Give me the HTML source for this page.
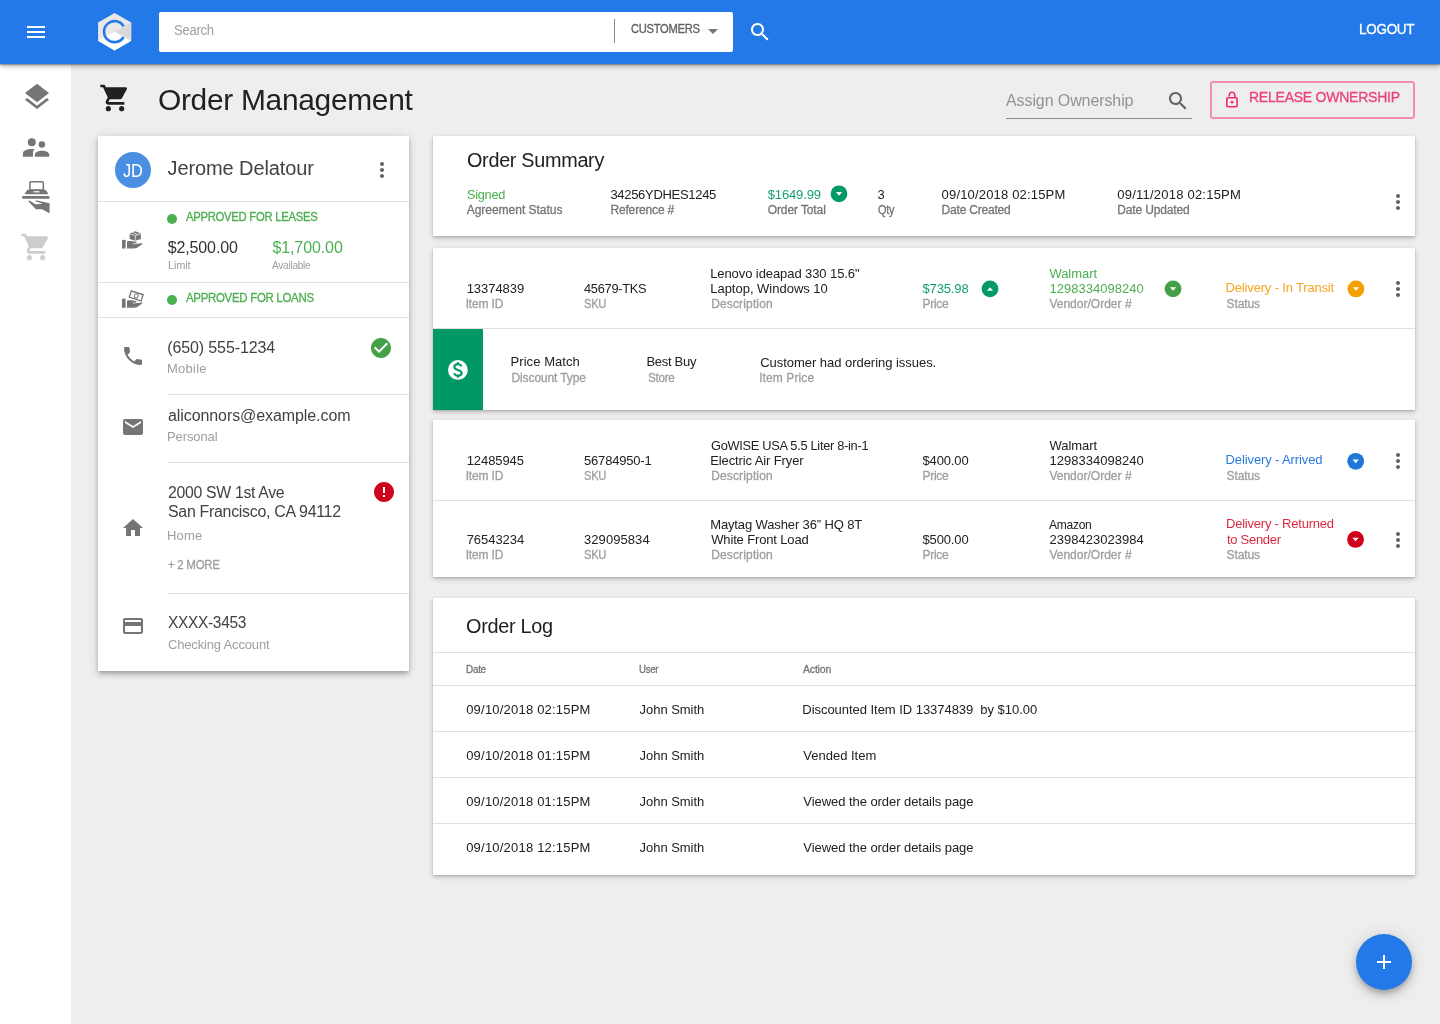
<!DOCTYPE html>
<html><head><meta charset="utf-8"><style>
html,body{margin:0;padding:0}
body{width:1440px;height:1024px;overflow:hidden;background:#eeeeee;position:relative;font-family:"Liberation Sans",sans-serif}
.t{position:absolute;white-space:nowrap;line-height:1;z-index:5;-webkit-font-smoothing:antialiased}
.card{position:absolute;background:#fff;box-shadow:0 2px 5px 0 rgba(0,0,0,.2),0 1px 2px 0 rgba(0,0,0,.14)}
.card4{box-shadow:0 2px 4px -1px rgba(0,0,0,.2),0 4px 5px 0 rgba(0,0,0,.14),0 1px 10px 0 rgba(0,0,0,.12)}
svg{z-index:4}
</style></head><body>
<div style="position:absolute;left:0;top:64px;width:71px;height:960px;background:#fff"></div>
<div style="position:absolute;left:0;top:0;width:1440px;height:64px;background:#2379e8;box-shadow:0 2px 5px rgba(0,0,0,.32),0 1px 1px rgba(0,0,0,.25);z-index:2"></div>
<div style="position:absolute;left:0;top:0;width:1440px;height:64px;z-index:3"><div style="position:absolute;left:27px;top:26px;width:18px;height:2px;background:#fff"></div><div style="position:absolute;left:27px;top:31px;width:18px;height:2px;background:#fff"></div><div style="position:absolute;left:27px;top:36px;width:18px;height:2px;background:#fff"></div><svg style="position:absolute;left:96px;top:11px" width="38" height="42" viewBox="96 11 38 42">
<polygon points="114.6,13 131.2,22.5 131.2,40.7 114.6,50.6 98.1,40.7 98.1,22.5" fill="#e8e8e8"/>
<polygon points="114.6,31.8 131.2,22.5 131.2,40.7" fill="#d9d9d9"/>
<polygon points="114.6,31.8 131.2,40.7 114.6,50.6 98.1,40.7" fill="#ffffff"/>
<path d="M123.6 26.3 A10.5 10.5 0 1 0 123.6 37.0" fill="none" stroke="#2379e8" stroke-width="2.6"/>
</svg><div style="position:absolute;left:159px;top:12px;width:574px;height:40px;background:#fff;border-radius:2px"></div><div style="position:absolute;left:614px;top:19px;width:1px;height:24px;background:#8a8a8a"></div><svg style="position:absolute;left:708px;top:29px" width="10" height="5"><path d="M0 0H10L5 5Z" fill="#757575"/></svg><svg style="position:absolute;left:747.5px;top:20px" width="24" height="24" viewBox="0 0 24 24"><path fill="#fff" d="M15.5 14h-.79l-.28-.27C15.41 12.59 16 11.11 16 9.5 16 5.91 13.09 3 9.5 3S3 5.91 3 9.5 5.91 16 9.5 16c1.61 0 3.09-.59 4.23-1.57l.27.28v.79l5 4.99L20.49 19l-4.99-5zm-6 0C7.01 14 5 11.99 5 9.5S7.01 5 9.5 5 14 7.01 14 9.5 11.99 14 9.5 14z"/></svg></div>
<svg style="position:absolute;left:21px;top:81px" width="32" height="32" viewBox="0 0 24 24"><path fill="#757575" d="M11.99 18.54l-7.37-5.73L3 14.07l9 7 9-7-1.63-1.27-7.38 5.74zM12 16l7.36-5.73L21 9l-9-7-9 7 1.63 1.27L12 16z"/></svg>
<svg style="position:absolute;left:20px;top:136px" width="32" height="24" viewBox="20 136 32 24">
<circle cx="31.8" cy="142.3" r="4" fill="#757575"/><circle cx="41.9" cy="144.5" r="3.2" fill="#757575"/>
<path d="M22.9 156.8 V153.5 C22.9 150.5 27 148.9 32 148.9 H34.6 C33.6 150.2 33 151.5 33 153 V156.8 Z" fill="#757575"/>
<path d="M34.9 156.8 V154.5 C34.9 152 38.5 150.7 42 150.7 C45.5 150.7 49.2 152 49.2 154.5 V156.8 Z" fill="#757575"/>
</svg>
<svg style="position:absolute;left:20px;top:178px" width="32" height="38" viewBox="20 178 32 38">
<rect x="29.9" y="181.7" width="13.4" height="8.2" rx="1" fill="none" stroke="#757575" stroke-width="1.5"/>
<path d="M27.5 189.8 H45.5 L48 193.2 C48 193.8 47.6 194.2 47 194.2 H25.8 C25.2 194.2 24.8 193.8 24.8 193.2 Z" fill="#757575"/>
<rect x="33.5" y="191.2" width="6" height="1.2" fill="#fff"/>
<rect x="22" y="196" width="27.6" height="2.7" rx="1.2" fill="#757575"/>
<path d="M28.3 201.2 L29.5 200.4 L35.3 204.2 L41 204 C41.5 204 41.8 203.6 41.6 203.2 L35.8 201.6 L35.8 200.3 L49.6 203.2 V213.2 L42 209.2 H35.8 Z" fill="#757575"/>
</svg>
<svg style="position:absolute;left:19.6px;top:230.6px" width="32" height="32" viewBox="0 0 24 24"><path fill="#cdcdcd" d="M7 18c-1.1 0-1.99.9-1.99 2S5.9 22 7 22s2-.9 2-2-.9-2-2-2zM1 2v2h2l3.6 7.59-1.35 2.45c-.16.28-.25.61-.25.96 0 1.1.9 2 2 2h12v-2H7.42c-.14 0-.25-.11-.25-.25l.03-.12.9-1.63h7.45c.75 0 1.41-.41 1.75-1.03l3.58-6.49c.08-.14.12-.31.12-.48 0-.55-.45-1-1-1H5.21l-.94-2H1zm16 16c-1.1 0-1.99.9-1.99 2s.89 2 1.99 2 2-.9 2-2-.9-2-2-2z"/></svg>
<svg style="position:absolute;left:98.7px;top:82px" width="32" height="32" viewBox="0 0 24 24"><path fill="#212121" d="M7 18c-1.1 0-1.99.9-1.99 2S5.9 22 7 22s2-.9 2-2-.9-2-2-2zM1 2v2h2l3.6 7.59-1.35 2.45c-.16.28-.25.61-.25.96 0 1.1.9 2 2 2h12v-2H7.42c-.14 0-.25-.11-.25-.25l.03-.12.9-1.63h7.45c.75 0 1.41-.41 1.75-1.03l3.58-6.49c.08-.14.12-.31.12-.48 0-.55-.45-1-1-1H5.21l-.94-2H1zm16 16c-1.1 0-1.99.9-1.99 2s.89 2 1.99 2 2-.9 2-2-.9-2-2-2z"/></svg>
<div style="position:absolute;left:1006px;top:118px;width:186px;height:1px;background:#8a8a8a"></div>
<svg style="position:absolute;left:1165.5px;top:88.6px" width="24" height="24" viewBox="0 0 24 24"><path fill="#616161" d="M15.5 14h-.79l-.28-.27C15.41 12.59 16 11.11 16 9.5 16 5.91 13.09 3 9.5 3S3 5.91 3 9.5 5.91 16 9.5 16c1.61 0 3.09-.59 4.23-1.57l.27.28v.79l5 4.99L20.49 19l-4.99-5zm-6 0C7.01 14 5 11.99 5 9.5S7.01 5 9.5 5 14 7.01 14 9.5 11.99 14 9.5 14z"/></svg>
<div style="position:absolute;left:1210px;top:81px;width:201px;height:34px;border:2px solid #f48db0;border-radius:3px"></div>
<svg style="position:absolute;left:1222px;top:88px" width="20" height="22" viewBox="1222 88 20 22">
<rect x="1226.8" y="97.8" width="10.3" height="8.9" rx="1.2" fill="none" stroke="#ef2a6f" stroke-width="1.6"/>
<path d="M1229.2 96.5 C1229 93.6 1230.4 92.3 1232 92.3 C1233.8 92.3 1235.1 93.8 1235.1 97.5" fill="none" stroke="#ef2a6f" stroke-width="1.6"/>
<circle cx="1232" cy="102.2" r="1.4" fill="#ef2a6f"/>
</svg>
<div class="card card4" style="left:98px;top:136px;width:311px;height:535px"></div>
<div style="position:absolute;left:115px;top:152px;width:36px;height:36px;border-radius:50%;background:#4a8fe2"></div><svg style="position:absolute;left:369.7px;top:158px" width="24" height="24" viewBox="0 0 24 24"><path fill="#616161" d="M12 8c1.1 0 2-.9 2-2s-.9-2-2-2-2 .9-2 2 .9 2 2 2zm0 2c-1.1 0-2 .9-2 2s.9 2 2 2 2-.9 2-2-.9-2-2-2zm0 6c-1.1 0-2 .9-2 2s.9 2 2 2 2-.9 2-2-.9-2-2-2z"/></svg><div style="position:absolute;left:98px;top:201px;width:311px;height:1px;background:#e0e0e0"></div><div style="position:absolute;left:167px;top:214px;width:10px;height:10px;border-radius:50%;background:#4caf50"></div><svg style="position:absolute;left:120px;top:229px" width="26" height="22" viewBox="120 229 26 22">
<rect x="122" y="239.9" width="3.6" height="8.6" fill="#757575"/>
<path d="M127 241.6 C128.5 241 130.5 241 132.6 241.3 L136 241.8 C136.8 242 136.8 243 136 243.2 L132.6 243.6 L133 244.2 L141.6 243.2 C142.4 243.1 142.8 243.8 142.2 244.3 L137.5 247.6 C136.5 248.3 135 248.5 133.5 248.5 H127 Z" fill="#757575"/>
<path d="M135.3 231.3 L140.9 233.6 V239 L135.3 240.7 L129.7 239 V233.6 Z" fill="#757575"/>
<path d="M129.9 233.7 L135.3 235.6 L140.7 233.7 M135.3 235.6 V240.6 M132.3 232.3 L137.8 234.5" fill="none" stroke="#fff" stroke-width="0.7"/>
</svg><div style="position:absolute;left:98px;top:282px;width:311px;height:1px;background:#e0e0e0"></div><svg style="position:absolute;left:120px;top:289px" width="26" height="22" viewBox="120 289 26 22">
<rect x="122" y="298.7" width="3.6" height="9" fill="#757575"/>
<path d="M127 300.8 C128.5 300.2 130.5 300.2 132.6 300.5 L136 301 C136.8 301.2 136.8 302.2 136 302.4 L132.6 302.8 L133 303.4 L141.6 302.4 C142.4 302.3 142.8 303 142.2 303.5 L137.5 306.8 C136.5 307.5 135 307.7 133.5 307.7 H127 Z" fill="#757575"/>
<g transform="rotate(18 136 296)"><rect x="130" y="292.6" width="12.4" height="6.6" fill="none" stroke="#757575" stroke-width="1.3"/><ellipse cx="136.2" cy="295.9" rx="1.8" ry="2.2" fill="none" stroke="#757575" stroke-width="1"/></g>
</svg><div style="position:absolute;left:167px;top:295px;width:10px;height:10px;border-radius:50%;background:#4caf50"></div><div style="position:absolute;left:98px;top:317px;width:311px;height:1px;background:#e0e0e0"></div><svg style="position:absolute;left:120.5px;top:343.8px" width="24" height="24" viewBox="0 0 24 24"><path fill="#757575" d="M6.62 10.79c1.44 2.83 3.76 5.14 6.59 6.59l2.2-2.2c.27-.27.67-.36 1.02-.24 1.12.37 2.33.57 3.57.57.55 0 1 .45 1 1V20c0 .55-.45 1-1 1-9.39 0-17-7.61-17-17 0-.55.45-1 1-1h3.5c.55 0 1 .45 1 1 0 1.25.2 2.45.57 3.57.11.35.03.74-.25 1.02l-2.2 2.2z"/></svg><svg style="position:absolute;left:368.8px;top:336px" width="24" height="24" viewBox="0 0 24 24"><path fill="#43a047" d="M12 2C6.48 2 2 6.48 2 12s4.48 10 10 10 10-4.48 10-10S17.52 2 12 2zm-2 15l-5-5 1.41-1.41L10 14.17l7.59-7.59L19 8l-9 9z"/></svg><div style="position:absolute;left:168px;top:394px;width:241px;height:1px;background:#e0e0e0"></div><svg style="position:absolute;left:120.9px;top:415px" width="24" height="24" viewBox="0 0 24 24"><path fill="#757575" d="M20 4H4c-1.1 0-1.99.9-1.99 2L2 18c0 1.1.9 2 2 2h16c1.1 0 2-.9 2-2V6c0-1.1-.9-2-2-2zm0 4l-8 5-8-5V6l8 5 8-5v2z"/></svg><div style="position:absolute;left:168px;top:462px;width:241px;height:1px;background:#e0e0e0"></div><svg style="position:absolute;left:121.3px;top:516.2px" width="24" height="24" viewBox="0 0 24 24"><path fill="#757575" d="M10 20v-6h4v6h5v-8h3L12 3 2 12h3v8z"/></svg><svg style="position:absolute;left:371.8px;top:480px" width="24" height="24" viewBox="0 0 24 24"><path fill="#d0021b" d="M12 2C6.48 2 2 6.48 2 12s4.48 10 10 10 10-4.48 10-10S17.52 2 12 2zm1 15h-2v-2h2v2zm0-4h-2V7h2v6z"/></svg><div style="position:absolute;left:168px;top:593px;width:241px;height:1px;background:#e0e0e0"></div><svg style="position:absolute;left:121.3px;top:614px" width="24" height="24" viewBox="0 0 24 24"><path fill="#757575" d="M20 4H4c-1.11 0-1.99.89-1.99 2L2 18c0 1.11.89 2 2 2h16c1.11 0 2-.89 2-2V6c0-1.11-.89-2-2-2zm0 14H4v-6h16v6zm0-10H4V6h16v2z"/></svg>
<div class="card" style="left:433px;top:136px;width:982px;height:100px"></div>
<svg style="position:absolute;left:829px;top:183px" width="20" height="20" viewBox="829 183 20 20"><circle cx="839.00" cy="193.80" r="8.4" fill="#049a67"/><path fill="#fff" d="M835.90 192.10 L839.00 195.70 L842.10 192.10Z"/></svg>
<svg style="position:absolute;left:1385.8px;top:189.8px" width="24" height="24" viewBox="0 0 24 24"><path fill="#616161" d="M12 8c1.1 0 2-.9 2-2s-.9-2-2-2-2 .9-2 2 .9 2 2 2zm0 2c-1.1 0-2 .9-2 2s.9 2 2 2 2-.9 2-2-.9-2-2-2zm0 6c-1.1 0-2 .9-2 2s.9 2 2 2 2-.9 2-2-.9-2-2-2z"/></svg>
<div class="card" style="left:433px;top:248px;width:982px;height:162px"></div>
<div style="position:absolute;left:433px;top:328px;width:982px;height:1px;background:#e0e0e0"></div>
<div style="position:absolute;left:433px;top:329px;width:50px;height:81px;background:#029866"></div>
<svg style="position:absolute;left:446px;top:358px" width="24" height="24" viewBox="446 358 24 24">
<circle cx="457.9" cy="369.9" r="9.9" fill="#fff"/>
<path d="M461.4 366.3 C460.9 364.9 459.7 364.2 457.9 364.2 C455.7 364.2 454.3 365.3 454.3 366.9 C454.3 368.6 455.8 369.3 457.9 369.9 C460.3 370.6 461.7 371.4 461.7 373.2 C461.7 374.8 460.2 375.6 457.9 375.6 C455.9 375.6 454.6 374.8 454.1 373.2" fill="none" stroke="#029866" stroke-width="2.1"/>
<rect x="456.9" y="362.1" width="2" height="2.4" fill="#029866"/><rect x="456.9" y="375.3" width="2" height="2.4" fill="#029866"/>
</svg>
<svg style="position:absolute;left:980px;top:278px" width="20" height="20" viewBox="980 278 20 20"><circle cx="990.00" cy="288.90" r="8.4" fill="#049a67"/><path fill="#fff" d="M986.90 290.80 L990.00 287.20 L993.10 290.80Z"/></svg>
<svg style="position:absolute;left:1163px;top:278px" width="20" height="20" viewBox="1163 278 20 20"><circle cx="1173.05" cy="288.85" r="8.4" fill="#43a047"/><path fill="#fff" d="M1169.95 287.15 L1173.05 290.75 L1176.15 287.15Z"/></svg>
<svg style="position:absolute;left:1345px;top:278px" width="20" height="20" viewBox="1345 278 20 20"><circle cx="1355.95" cy="288.95" r="8.4" fill="#f5a000"/><path fill="#fff" d="M1352.85 287.25 L1355.95 290.85 L1359.05 287.25Z"/></svg>
<svg style="position:absolute;left:1386px;top:277px" width="24" height="24" viewBox="0 0 24 24"><path fill="#616161" d="M12 8c1.1 0 2-.9 2-2s-.9-2-2-2-2 .9-2 2 .9 2 2 2zm0 2c-1.1 0-2 .9-2 2s.9 2 2 2 2-.9 2-2-.9-2-2-2zm0 6c-1.1 0-2 .9-2 2s.9 2 2 2 2-.9 2-2-.9-2-2-2z"/></svg>
<div class="card" style="left:433px;top:420px;width:982px;height:157px"></div>
<div style="position:absolute;left:433px;top:500px;width:982px;height:1px;background:#e0e0e0"></div>
<svg style="position:absolute;left:1345px;top:451px" width="20" height="20" viewBox="1345 451 20 20"><circle cx="1355.70" cy="461.30" r="8.4" fill="#1f77d8"/><path fill="#fff" d="M1352.60 459.60 L1355.70 463.20 L1358.80 459.60Z"/></svg>
<svg style="position:absolute;left:1386px;top:449px" width="24" height="24" viewBox="0 0 24 24"><path fill="#616161" d="M12 8c1.1 0 2-.9 2-2s-.9-2-2-2-2 .9-2 2 .9 2 2 2zm0 2c-1.1 0-2 .9-2 2s.9 2 2 2 2-.9 2-2-.9-2-2-2zm0 6c-1.1 0-2 .9-2 2s.9 2 2 2 2-.9 2-2-.9-2-2-2z"/></svg>
<svg style="position:absolute;left:1345px;top:529px" width="20" height="20" viewBox="1345 529 20 20"><circle cx="1355.55" cy="539.45" r="8.4" fill="#d0021b"/><path fill="#fff" d="M1352.45 537.75 L1355.55 541.35 L1358.65 537.75Z"/></svg>
<svg style="position:absolute;left:1386px;top:527.5px" width="24" height="24" viewBox="0 0 24 24"><path fill="#616161" d="M12 8c1.1 0 2-.9 2-2s-.9-2-2-2-2 .9-2 2 .9 2 2 2zm0 2c-1.1 0-2 .9-2 2s.9 2 2 2 2-.9 2-2-.9-2-2-2zm0 6c-1.1 0-2 .9-2 2s.9 2 2 2 2-.9 2-2-.9-2-2-2z"/></svg>
<div class="card" style="left:433px;top:598px;width:982px;height:277px"></div>
<div style="position:absolute;left:433px;top:652px;width:982px;height:1px;background:#e0e0e0"></div>
<div style="position:absolute;left:433px;top:685px;width:982px;height:1px;background:#e0e0e0"></div>
<div style="position:absolute;left:433px;top:731px;width:982px;height:1px;background:#e0e0e0"></div>
<div style="position:absolute;left:433px;top:777px;width:982px;height:1px;background:#e0e0e0"></div>
<div style="position:absolute;left:433px;top:823px;width:982px;height:1px;background:#e0e0e0"></div>
<div style="position:absolute;left:1356px;top:934px;width:56px;height:56px;border-radius:50%;background:#2379e8;box-shadow:0 3px 5px -1px rgba(0,0,0,.2),0 6px 10px 0 rgba(0,0,0,.14),0 1px 18px 0 rgba(0,0,0,.12)"></div>
<div style="position:absolute;left:1377px;top:961px;width:14px;height:2px;background:#fff"></div>
<div style="position:absolute;left:1383px;top:955px;width:2px;height:14px;background:#fff"></div>
<div style="position:absolute;left:0;top:0;width:1440px;height:1024px;will-change:transform;z-index:5">
<div class="t" id="t0" style="left:174.00px;top:23.00px;font-size:14.0px;color:#9e9e9e;letter-spacing:-0.300px;transform:scaleX(0.9341);transform-origin:0 0;">Search</div>
<div class="t" id="t1" style="left:631.00px;top:23.00px;font-size:12.0px;color:#5f5f5f;-webkit-text-stroke:0.3px #5f5f5f;letter-spacing:-0.300px;transform:scaleX(0.9318);transform-origin:0 0;">CUSTOMERS</div>
<div class="t" id="t2" style="left:1359.04px;top:22.00px;font-size:14.0px;color:#ffffff;-webkit-text-stroke:0.3px #ffffff;letter-spacing:-0.300px;transform:scaleX(0.9638);transform-origin:0 0;">LOGOUT</div>
<div class="t" id="t3" style="left:157.50px;top:84.70px;font-size:30.0px;color:#212121;letter-spacing:-0.300px;transform:scaleX(0.9969);transform-origin:0 0;">Order Management</div>
<div class="t" id="t4" style="left:1006.00px;top:92.90px;font-size:16.0px;color:#939393;letter-spacing:-0.096px;">Assign Ownership</div>
<div class="t" id="t5" style="left:1249.00px;top:90.00px;font-size:14.0px;color:#ec407a;-webkit-text-stroke:0.3px #ec407a;letter-spacing:-0.236px;">RELEASE OWNERSHIP</div>
<div class="t" id="t6" style="left:122.50px;top:161.80px;font-size:18.0px;color:#ffffff;letter-spacing:-0.300px;transform:scaleX(0.9078);transform-origin:0 0;">JD</div>
<div class="t" id="t7" style="left:167.50px;top:157.70px;font-size:20.0px;color:#424242;letter-spacing:-0.099px;">Jerome Delatour</div>
<div class="t" id="t8" style="left:186.30px;top:211.10px;font-size:12.0px;color:#4caf50;-webkit-text-stroke:0.3px #4caf50;letter-spacing:-0.300px;transform:scaleX(0.9409);transform-origin:0 0;">APPROVED FOR LEASES</div>
<div class="t" id="t9" style="left:167.70px;top:240.30px;font-size:16.0px;color:#333333;letter-spacing:-0.123px;">$2,500.00</div>
<div class="t" id="t10" style="left:168.00px;top:260.00px;font-size:11.0px;color:#9e9e9e;letter-spacing:-0.142px;">Limit</div>
<div class="t" id="t11" style="left:272.40px;top:240.30px;font-size:16.0px;color:#4caf50;letter-spacing:-0.098px;">$1,700.00</div>
<div class="t" id="t12" style="left:272.40px;top:260.00px;font-size:11.0px;color:#9e9e9e;letter-spacing:-0.300px;transform:scaleX(0.9207);transform-origin:0 0;">Available</div>
<div class="t" id="t13" style="left:186.00px;top:292.00px;font-size:12.0px;color:#4caf50;-webkit-text-stroke:0.3px #4caf50;letter-spacing:-0.300px;transform:scaleX(0.9534);transform-origin:0 0;">APPROVED FOR LOANS</div>
<div class="t" id="t14" style="left:167.30px;top:340.00px;font-size:16.0px;color:#424242;letter-spacing:-0.124px;">(650) 555-1234</div>
<div class="t" id="t15" style="left:167.00px;top:362.00px;font-size:13.0px;color:#9e9e9e;letter-spacing:0.237px;">Mobile</div>
<div class="t" id="t16" style="left:168.00px;top:408.00px;font-size:16.0px;color:#424242;letter-spacing:-0.085px;">aliconnors@example.com</div>
<div class="t" id="t17" style="left:167.00px;top:429.80px;font-size:13.0px;color:#9e9e9e;letter-spacing:-0.103px;">Personal</div>
<div class="t" id="t18" style="left:168.40px;top:485.20px;font-size:16.0px;color:#424242;letter-spacing:-0.300px;transform:scaleX(0.9863);transform-origin:0 0;">2000 SW 1st Ave</div>
<div class="t" id="t19" style="left:168.00px;top:504.00px;font-size:16.0px;color:#424242;letter-spacing:-0.300px;transform:scaleX(0.9964);transform-origin:0 0;">San Francisco, CA 94112</div>
<div class="t" id="t20" style="left:167.00px;top:529.00px;font-size:13.0px;color:#9e9e9e;letter-spacing:0.184px;">Home</div>
<div class="t" id="t21" style="left:168.00px;top:559.00px;font-size:12.0px;color:#9e9e9e;-webkit-text-stroke:0.3px #9e9e9e;letter-spacing:-0.300px;transform:scaleX(0.9586);transform-origin:0 0;">+ 2 MORE</div>
<div class="t" id="t22" style="left:168.00px;top:615.00px;font-size:16.0px;color:#424242;letter-spacing:-0.300px;transform:scaleX(0.9642);transform-origin:0 0;">XXXX-3453</div>
<div class="t" id="t23" style="left:168.00px;top:637.60px;font-size:13.0px;color:#9e9e9e;letter-spacing:-0.165px;">Checking Account</div>
<div class="t" id="t24" style="left:466.70px;top:150.00px;font-size:20.0px;color:#212121;letter-spacing:-0.300px;transform:scaleX(0.9903);transform-origin:0 0;">Order Summary</div>
<div class="t" id="t25" style="left:466.70px;top:188.00px;font-size:13.0px;color:#4caf50;letter-spacing:-0.300px;transform:scaleX(0.9833);transform-origin:0 0;">Signed</div>
<div class="t" id="t26" style="left:466.70px;top:204.00px;font-size:12.0px;color:#757575;-webkit-text-stroke:0.3px #757575;letter-spacing:-0.017px;">Agreement Status</div>
<div class="t" id="t27" style="left:610.40px;top:188.00px;font-size:13.0px;color:#212121;letter-spacing:-0.300px;">34256YDHES1245</div>
<div class="t" id="t28" style="left:610.40px;top:204.00px;font-size:12.0px;color:#757575;-webkit-text-stroke:0.3px #757575;letter-spacing:-0.150px;">Reference #</div>
<div class="t" id="t29" style="left:767.70px;top:187.75px;font-size:13.0px;color:#17a06d;letter-spacing:-0.127px;">$1649.99</div>
<div class="t" id="t30" style="left:767.70px;top:204.00px;font-size:12.0px;color:#757575;-webkit-text-stroke:0.3px #757575;letter-spacing:-0.099px;">Order Total</div>
<div class="t" id="t31" style="left:877.50px;top:188.00px;font-size:13.0px;color:#212121;">3</div>
<div class="t" id="t32" style="left:877.50px;top:204.00px;font-size:12.0px;color:#757575;-webkit-text-stroke:0.3px #757575;letter-spacing:-0.300px;transform:scaleX(0.9132);transform-origin:0 0;">Qty</div>
<div class="t" id="t33" style="left:941.60px;top:187.80px;font-size:13.0px;color:#212121;letter-spacing:0.172px;">09/10/2018 02:15PM</div>
<div class="t" id="t34" style="left:941.60px;top:203.90px;font-size:12.0px;color:#757575;-webkit-text-stroke:0.3px #757575;letter-spacing:-0.209px;">Date Created</div>
<div class="t" id="t35" style="left:1117.30px;top:187.80px;font-size:13.0px;color:#212121;letter-spacing:0.223px;">09/11/2018 02:15PM</div>
<div class="t" id="t36" style="left:1117.30px;top:203.90px;font-size:12.0px;color:#757575;-webkit-text-stroke:0.3px #757575;letter-spacing:-0.162px;">Date Updated</div>
<div class="t" id="t37" style="left:466.70px;top:282.10px;font-size:13.0px;color:#212121;letter-spacing:-0.044px;">13374839</div>
<div class="t" id="t38" style="left:465.70px;top:298.10px;font-size:12.0px;color:#9e9e9e;-webkit-text-stroke:0.3px #9e9e9e;letter-spacing:-0.159px;">Item ID</div>
<div class="t" id="t39" style="left:584.00px;top:282.10px;font-size:13.0px;color:#212121;letter-spacing:-0.300px;transform:scaleX(0.9876);transform-origin:0 0;">45679-TKS</div>
<div class="t" id="t40" style="left:584.00px;top:298.10px;font-size:12.0px;color:#9e9e9e;-webkit-text-stroke:0.3px #9e9e9e;letter-spacing:-0.300px;transform:scaleX(0.9313);transform-origin:0 0;">SKU</div>
<div class="t" id="t41" style="left:710.20px;top:266.80px;font-size:13.0px;color:#212121;letter-spacing:-0.085px;">Lenovo ideapad 330 15.6&quot;</div>
<div class="t" id="t42" style="left:710.20px;top:282.10px;font-size:13.0px;color:#212121;letter-spacing:-0.010px;">Laptop, Windows 10</div>
<div class="t" id="t43" style="left:711.20px;top:298.10px;font-size:12.0px;color:#9e9e9e;-webkit-text-stroke:0.3px #9e9e9e;letter-spacing:0.145px;">Description</div>
<div class="t" id="t44" style="left:922.50px;top:282.10px;font-size:13.0px;color:#17a06d;letter-spacing:-0.144px;">$735.98</div>
<div class="t" id="t45" style="left:922.50px;top:298.10px;font-size:12.0px;color:#9e9e9e;-webkit-text-stroke:0.3px #9e9e9e;letter-spacing:-0.292px;">Price</div>
<div class="t" id="t46" style="left:1049.40px;top:266.80px;font-size:13.0px;color:#4caf50;letter-spacing:-0.032px;">Walmart</div>
<div class="t" id="t47" style="left:1049.40px;top:282.10px;font-size:13.0px;color:#4caf50;letter-spacing:0.028px;">1298334098240</div>
<div class="t" id="t48" style="left:1049.40px;top:298.10px;font-size:12.0px;color:#9e9e9e;-webkit-text-stroke:0.3px #9e9e9e;letter-spacing:0.010px;">Vendor/Order #</div>
<div class="t" id="t49" style="left:1225.60px;top:281.10px;font-size:13.0px;color:#f5a623;letter-spacing:-0.170px;">Delivery - In Transit</div>
<div class="t" id="t50" style="left:1226.60px;top:298.10px;font-size:12.0px;color:#9e9e9e;-webkit-text-stroke:0.3px #9e9e9e;letter-spacing:-0.124px;">Status</div>
<div class="t" id="t51" style="left:466.70px;top:454.20px;font-size:13.0px;color:#212121;letter-spacing:-0.080px;">12485945</div>
<div class="t" id="t52" style="left:465.70px;top:470.20px;font-size:12.0px;color:#9e9e9e;-webkit-text-stroke:0.3px #9e9e9e;letter-spacing:-0.159px;">Item ID</div>
<div class="t" id="t53" style="left:584.00px;top:454.20px;font-size:13.0px;color:#212121;letter-spacing:-0.185px;">56784950-1</div>
<div class="t" id="t54" style="left:584.00px;top:470.20px;font-size:12.0px;color:#9e9e9e;-webkit-text-stroke:0.3px #9e9e9e;letter-spacing:-0.300px;transform:scaleX(0.9313);transform-origin:0 0;">SKU</div>
<div class="t" id="t55" style="left:711.20px;top:438.90px;font-size:13.0px;color:#212121;letter-spacing:-0.300px;transform:scaleX(0.9856);transform-origin:0 0;">GoWISE USA 5.5 Liter 8-in-1</div>
<div class="t" id="t56" style="left:710.20px;top:454.20px;font-size:13.0px;color:#212121;letter-spacing:-0.114px;">Electric Air Fryer</div>
<div class="t" id="t57" style="left:711.20px;top:470.20px;font-size:12.0px;color:#9e9e9e;-webkit-text-stroke:0.3px #9e9e9e;letter-spacing:0.145px;">Description</div>
<div class="t" id="t58" style="left:922.50px;top:454.20px;font-size:13.0px;color:#212121;letter-spacing:-0.144px;">$400.00</div>
<div class="t" id="t59" style="left:922.50px;top:470.20px;font-size:12.0px;color:#9e9e9e;-webkit-text-stroke:0.3px #9e9e9e;letter-spacing:-0.292px;">Price</div>
<div class="t" id="t60" style="left:1049.40px;top:438.90px;font-size:13.0px;color:#212121;letter-spacing:-0.016px;">Walmart</div>
<div class="t" id="t61" style="left:1049.40px;top:454.20px;font-size:13.0px;color:#212121;letter-spacing:0.028px;">1298334098240</div>
<div class="t" id="t62" style="left:1049.40px;top:470.20px;font-size:12.0px;color:#9e9e9e;-webkit-text-stroke:0.3px #9e9e9e;letter-spacing:0.010px;">Vendor/Order #</div>
<div class="t" id="t63" style="left:1225.60px;top:453.20px;font-size:13.0px;color:#2a7ade;letter-spacing:-0.121px;">Delivery - Arrived</div>
<div class="t" id="t64" style="left:1226.60px;top:470.20px;font-size:12.0px;color:#9e9e9e;-webkit-text-stroke:0.3px #9e9e9e;letter-spacing:-0.124px;">Status</div>
<div class="t" id="t65" style="left:466.70px;top:533.30px;font-size:13.0px;color:#212121;letter-spacing:-0.044px;">76543234</div>
<div class="t" id="t66" style="left:465.70px;top:549.30px;font-size:12.0px;color:#9e9e9e;-webkit-text-stroke:0.3px #9e9e9e;letter-spacing:-0.159px;">Item ID</div>
<div class="t" id="t67" style="left:584.00px;top:533.30px;font-size:13.0px;color:#212121;letter-spacing:0.070px;">329095834</div>
<div class="t" id="t68" style="left:584.00px;top:549.30px;font-size:12.0px;color:#9e9e9e;-webkit-text-stroke:0.3px #9e9e9e;letter-spacing:-0.300px;transform:scaleX(0.9313);transform-origin:0 0;">SKU</div>
<div class="t" id="t69" style="left:710.20px;top:518.00px;font-size:13.0px;color:#212121;letter-spacing:-0.127px;">Maytag Washer 36” HQ 8T</div>
<div class="t" id="t70" style="left:711.20px;top:533.30px;font-size:13.0px;color:#212121;letter-spacing:-0.146px;">White Front Load</div>
<div class="t" id="t71" style="left:711.20px;top:549.30px;font-size:12.0px;color:#9e9e9e;-webkit-text-stroke:0.3px #9e9e9e;letter-spacing:0.145px;">Description</div>
<div class="t" id="t72" style="left:922.50px;top:533.30px;font-size:13.0px;color:#212121;letter-spacing:-0.144px;">$500.00</div>
<div class="t" id="t73" style="left:922.50px;top:549.30px;font-size:12.0px;color:#9e9e9e;-webkit-text-stroke:0.3px #9e9e9e;letter-spacing:-0.292px;">Price</div>
<div class="t" id="t74" style="left:1049.40px;top:518.00px;font-size:13.0px;color:#212121;letter-spacing:-0.300px;transform:scaleX(0.9269);transform-origin:0 0;">Amazon</div>
<div class="t" id="t75" style="left:1049.40px;top:533.30px;font-size:13.0px;color:#212121;letter-spacing:0.028px;">2398423023984</div>
<div class="t" id="t76" style="left:1049.40px;top:549.30px;font-size:12.0px;color:#9e9e9e;-webkit-text-stroke:0.3px #9e9e9e;letter-spacing:0.010px;">Vendor/Order #</div>
<div class="t" id="t77" style="left:1226.00px;top:516.80px;font-size:13.0px;color:#db2a40;letter-spacing:-0.220px;">Delivery - Returned</div>
<div class="t" id="t78" style="left:1227.00px;top:532.50px;font-size:13.0px;color:#db2a40;letter-spacing:-0.293px;">to Sender</div>
<div class="t" id="t79" style="left:1226.60px;top:549.30px;font-size:12.0px;color:#9e9e9e;-webkit-text-stroke:0.3px #9e9e9e;letter-spacing:-0.124px;">Status</div>
<div class="t" id="t80" style="left:510.50px;top:355.00px;font-size:13.0px;color:#212121;letter-spacing:0.070px;">Price Match</div>
<div class="t" id="t81" style="left:511.50px;top:372.00px;font-size:12.0px;color:#9e9e9e;-webkit-text-stroke:0.3px #9e9e9e;letter-spacing:-0.114px;">Discount Type</div>
<div class="t" id="t82" style="left:646.50px;top:355.00px;font-size:13.0px;color:#212121;letter-spacing:-0.300px;">Best Buy</div>
<div class="t" id="t83" style="left:647.50px;top:372.00px;font-size:12.0px;color:#9e9e9e;-webkit-text-stroke:0.3px #9e9e9e;letter-spacing:-0.300px;transform:scaleX(0.9745);transform-origin:0 0;">Store</div>
<div class="t" id="t84" style="left:760.20px;top:356.00px;font-size:13.0px;color:#212121;letter-spacing:-0.036px;">Customer had ordering issues.</div>
<div class="t" id="t85" style="left:759.20px;top:372.00px;font-size:12.0px;color:#9e9e9e;-webkit-text-stroke:0.3px #9e9e9e;letter-spacing:0.096px;">Item Price</div>
<div class="t" id="t86" style="left:465.60px;top:616.10px;font-size:20.0px;color:#212121;letter-spacing:-0.300px;transform:scaleX(0.9928);transform-origin:0 0;">Order Log</div>
<div class="t" id="t87" style="left:466.10px;top:664.00px;font-size:10.5px;color:#757575;-webkit-text-stroke:0.3px #757575;letter-spacing:-0.300px;transform:scaleX(0.9468);transform-origin:0 0;">Date</div>
<div class="t" id="t88" style="left:639.00px;top:664.00px;font-size:10.5px;color:#757575;-webkit-text-stroke:0.3px #757575;letter-spacing:-0.300px;transform:scaleX(0.9186);transform-origin:0 0;">User</div>
<div class="t" id="t89" style="left:803.00px;top:664.00px;font-size:10.5px;color:#757575;-webkit-text-stroke:0.3px #757575;letter-spacing:-0.189px;">Action</div>
<div class="t" id="t90" style="left:466.20px;top:703.00px;font-size:13.0px;color:#212121;letter-spacing:0.207px;">09/10/2018 02:15PM</div>
<div class="t" id="t91" style="left:639.60px;top:703.00px;font-size:13.0px;color:#212121;letter-spacing:-0.045px;">John Smith</div>
<div class="t" id="t92" style="left:802.30px;top:703.00px;font-size:13.0px;color:#212121;letter-spacing:-0.040px;">Discounted Item ID 13374839  by $10.00</div>
<div class="t" id="t93" style="left:466.20px;top:749.00px;font-size:13.0px;color:#212121;letter-spacing:0.207px;">09/10/2018 01:15PM</div>
<div class="t" id="t94" style="left:639.60px;top:749.00px;font-size:13.0px;color:#212121;letter-spacing:-0.045px;">John Smith</div>
<div class="t" id="t95" style="left:803.30px;top:749.00px;font-size:13.0px;color:#212121;letter-spacing:-0.007px;">Vended Item</div>
<div class="t" id="t96" style="left:466.20px;top:795.00px;font-size:13.0px;color:#212121;letter-spacing:0.207px;">09/10/2018 01:15PM</div>
<div class="t" id="t97" style="left:639.60px;top:795.00px;font-size:13.0px;color:#212121;letter-spacing:-0.045px;">John Smith</div>
<div class="t" id="t98" style="left:803.30px;top:795.00px;font-size:13.0px;color:#212121;letter-spacing:-0.055px;">Viewed the order details page</div>
<div class="t" id="t99" style="left:466.20px;top:841.00px;font-size:13.0px;color:#212121;letter-spacing:0.207px;">09/10/2018 12:15PM</div>
<div class="t" id="t100" style="left:639.60px;top:841.00px;font-size:13.0px;color:#212121;letter-spacing:-0.045px;">John Smith</div>
<div class="t" id="t101" style="left:803.30px;top:841.00px;font-size:13.0px;color:#212121;letter-spacing:-0.055px;">Viewed the order details page</div>
</div>
</body></html>
